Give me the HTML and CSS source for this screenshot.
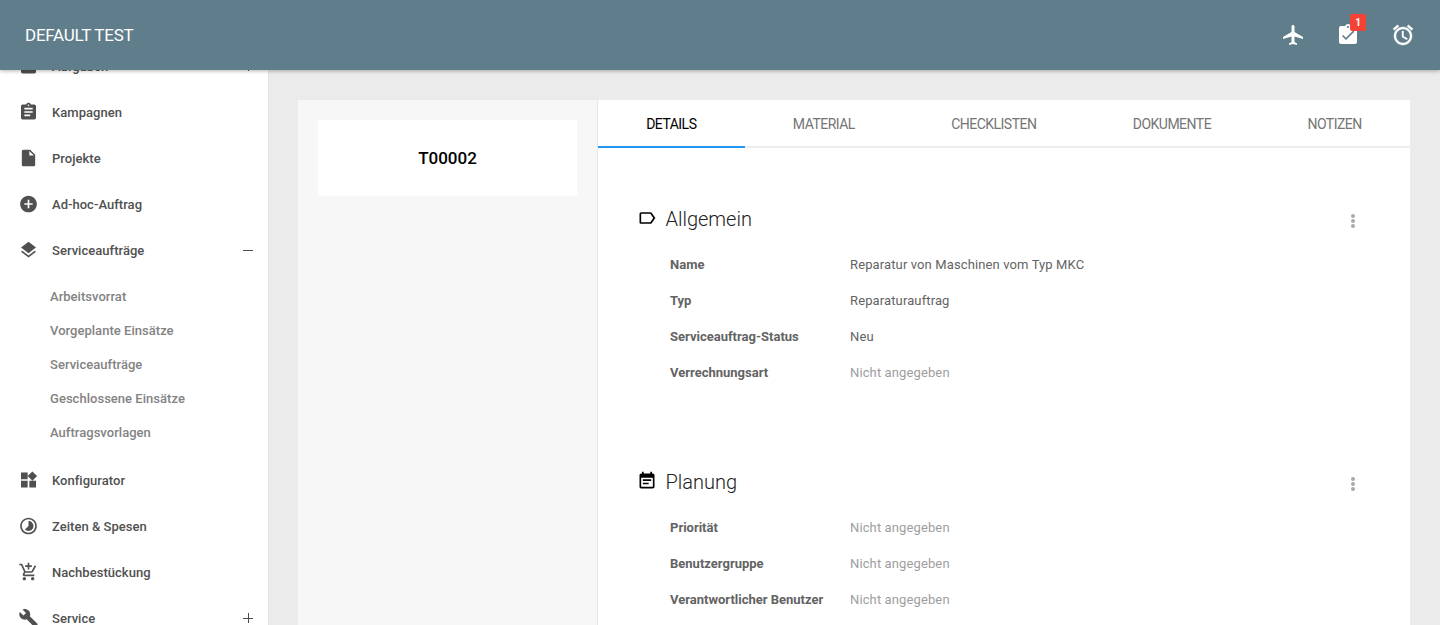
FILE: index.html
```html
<!DOCTYPE html>
<html lang="de">
<head>
<meta charset="utf-8">
<title>Serviceauftrag T00002</title>
<link rel="stylesheet" href="styles.css">
</head>
<body>
<header class="topbar">
  <div class="brand">DEFAULT TEST</div>
  <nav class="tools">
    <a class="tool"><svg viewBox="0 0 24 24"><path d="M22 16v-2l-8.500-5V3.500c0-.83-.67-1.500-1.500-1.500s-1.500.67-1.500 1.500V9L2 14v2l8.500-2.500V19L8 20.500V22l4-1 4 1v-1.500L13.500 19v-5.500L22 16z"/></svg></a>
    <a class="tool"><svg viewBox="0 0 24 24"><path fill-rule="evenodd" d="M19 3h-4.180C14.400 1.840 13.300 1 12 1s-2.400.84-2.820 2H5c-1.100 0-2 .9-2 2v14c0 1.100.9 2 2 2h14c1.100 0 2-.9 2-2V5c0-1.100-.9-2-2-2zm-7 0c.55 0 1 .45 1 1s-.45 1-1 1-1-.45-1-1 .45-1 1-1zm-2 14l-4-4 1.100-1.100L10 14.800l7.200-7.200L18.300 8.700l-8.300 8.300z"/></svg><span class="badge">1</span></a>
    <a class="tool"><svg class="alarm" viewBox="0 0 24 24"><path d="M22 5.720l-4.600-3.860-1.290 1.530 4.600 3.860L22 5.720zM7.880 3.390L6.600 1.860 2 5.710l1.290 1.530 4.590-3.850zM12.500 8H11v6l4.750 2.850.75-1.230-4-2.370V8zM12 4c-4.970 0-9 4.030-9 9s4.020 9 9 9c4.970 0 9-4.030 9-9s-4.030-9-9-9zm0 16c-3.870 0-7-3.130-7-7s3.130-7 7-7 7 3.130 7 7-3.130 7-7 7z"/></svg></a>
  </nav>
</header>
<div class="shell">
  <aside class="sidebar">
    <a class="item"><svg viewBox="0 0 24 24"><path d="M19 3h-4.180C14.400 1.840 13.300 1 12 1s-2.400.84-2.820 2H5c-1.100 0-2 .9-2 2v14c0 1.100.9 2 2 2h14c1.100 0 2-.9 2-2V5c0-1.100-.9-2-2-2zm-9 14l-4-4 1.410-1.410L10 14.170l6.590-6.590L18 9l-8 8z"/></svg><span>Aufgaben</span><i class="toggle plus"></i></a>
    <a class="item"><svg viewBox="0 0 24 24"><path d="M19 3h-4.180C14.400 1.840 13.300 1 12 1c-1.300 0-2.400.84-2.820 2H5c-1.100 0-2 .9-2 2v14c0 1.100.9 2 2 2h14c1.100 0 2-.9 2-2V5c0-1.100-.9-2-2-2zm-7 0c.55 0 1 .45 1 1s-.45 1-1 1-1-.45-1-1 .45-1 1-1zm2 14H7v-2h7v2zm3-4H7v-2h10v2zm0-4H7V7h10v2z"/></svg><span>Kampagnen</span></a>
    <a class="item"><svg viewBox="0 0 24 24"><path d="M6 2c-1.100 0-1.990.9-1.990 2L4 20c0 1.100.89 2 1.990 2H18c1.100 0 2-.9 2-2V8l-6-6H6zm7 7V3.500L18.500 9H13z"/></svg><span>Projekte</span></a>
    <a class="item"><svg viewBox="0 0 24 24"><path d="M12 2C6.480 2 2 6.480 2 12s4.480 10 10 10 10-4.480 10-10S17.520 2 12 2zm5 11h-4v4h-2v-4H7v-2h4V7h2v4h4v2z"/></svg><span>Ad-hoc-Auftrag</span></a>
    <a class="item"><svg viewBox="0 0 24 24"><path d="M11.990 18.540l-7.370-5.730L3 14.070l9 7 9-7-1.630-1.270-7.380 5.740zM12 16l7.360-5.730L21 9l-9-7-9 7 1.630 1.270L12 16z"/></svg><span>Serviceaufträge</span><i class="toggle"></i></a>
    <div class="submenu">
      <a>Arbeitsvorrat</a>
      <a>Vorgeplante Einsätze</a>
      <a>Serviceaufträge</a>
      <a>Geschlossene Einsätze</a>
      <a>Auftragsvorlagen</a>
    </div>
    <a class="item"><svg viewBox="0 0 24 24"><path d="M13 13v8h8v-8h-8zM3 21h8v-8H3v8zM3 3v8h8V3H3zm13.660-1.310L11 7.340 16.660 13l5.660-5.660-5.660-5.650z"/></svg><span>Konfigurator</span></a>
    <a class="item"><svg viewBox="0 0 24 24"><path d="M16.240 7.760C15.070 6.590 13.540 6 12 6v6l-4.240 4.240c2.340 2.340 6.140 2.340 8.490 0 2.340-2.340 2.340-6.140-.01-8.480zM12 2C6.480 2 2 6.480 2 12s4.480 10 10 10 10-4.480 10-10S17.520 2 12 2zm0 18c-4.420 0-8-3.580-8-8s3.580-8 8-8 8 3.580 8 8-3.580 8-8 8z"/></svg><span>Zeiten &amp; Spesen</span></a>
    <a class="item"><svg viewBox="0 0 24 24"><path d="M11 9h2V6h3V4h-3V1h-2v3H8v2h3v3zm-4 9c-1.100 0-1.990.9-1.990 2S5.900 22 7 22s2-.9 2-2-.9-2-2-2zm10 0c-1.100 0-1.990.9-1.990 2s.89 2 1.990 2 2-.9 2-2-.9-2-2-2zm-9.830-3.250l.03-.12.9-1.630h7.450c.75 0 1.410-.41 1.750-1.030l3.860-7.010L19.420 4h-.01l-1.100 2-2.760 5H8.530l-.13-.27L6.160 6l-.95-2-.94-2H1v2h2l3.600 7.590-1.350 2.450c-.16.28-.25.61-.25.96 0 1.100.9 2 2 2h12v-2H7.420c-.13 0-.25-.11-.25-.25z"/></svg><span>Nachbestückung</span></a>
    <a class="item"><svg viewBox="0 0 24 24"><path d="M22.700 19l-9.100-9.100c.9-2.300.4-5-1.500-6.900-2-2-5-2.400-7.400-1.300L9 6 6 9 1.600 4.700C.4 7.100.9 10.100 2.900 12.100c1.900 1.900 4.600 2.400 6.900 1.500l9.100 9.100c.4.4 1 .4 1.400 0l2.300-2.300c.5-.4.5-1.100.1-1.400z"/></svg><span>Service</span><i class="toggle plus"></i></a>
  </aside>
  <main class="content">
    <section class="order">
      <div class="order-number">T00002</div>
    </section>
    <section class="detail">
      <nav class="tabs">
        <a class="tab active">DETAILS</a>
        <a class="tab">MATERIAL</a>
        <a class="tab">CHECKLISTEN</a>
        <a class="tab">DOKUMENTE</a>
        <a class="tab">NOTIZEN</a>
      </nav>
      <div class="block">
        <div class="block-head">
          <svg viewBox="0 0 24 24"><path d="M17.630 5.840C17.270 5.330 16.670 5 16 5L5 5.010C3.900 5.010 3 5.900 3 7v10c0 1.100.9 1.990 2 1.990L16 19c.67 0 1.270-.33 1.630-.84L22 12l-4.370-6.160zM16 17H5V7h11l3.550 5L16 17z"/></svg>
          <h2>Allgemein</h2>
          <div class="more"><b></b><b></b><b></b></div>
        </div>
        <dl>
          <dt>Name</dt><dd>Reparatur von Maschinen vom Typ MKC</dd>
          <dt>Typ</dt><dd>Reparaturauftrag</dd>
          <dt>Serviceauftrag-Status</dt><dd>Neu</dd>
          <dt>Verrechnungsart</dt><dd class="empty">Nicht angegeben</dd>
        </dl>
      </div>
      <div class="block">
        <div class="block-head">
          <svg viewBox="0 0 24 24"><path d="M17 10H7v2h10v-2zm2-7h-1V1h-2v2H8V1H6v2H5c-1.110 0-1.990.9-1.990 2L3 19c0 1.100.89 2 2 2h14c1.100 0 2-.9 2-2V5c0-1.100-.9-2-2-2zm0 16H5V8h14v11zm-5-5H7v2h7v-2z"/></svg>
          <h2>Planung</h2>
          <div class="more"><b></b><b></b><b></b></div>
        </div>
        <dl>
          <dt>Priorität</dt><dd class="empty">Nicht angegeben</dd>
          <dt>Benutzergruppe</dt><dd class="empty">Nicht angegeben</dd>
          <dt>Verantwortlicher Benutzer</dt><dd class="empty">Nicht angegeben</dd>
        </dl>
      </div>
    </section>
  </main>
</div>
</body>
</html>
```
FILE: styles.css
```css
* { box-sizing: border-box; }
html, body { margin: 0; height: 100%; overflow: hidden; }
body {
  display: flex;
  flex-direction: column;
  background: #ebebeb;
  font-family: Roboto, "Liberation Sans", sans-serif;
  font-size: 13px;
  color: #636363;
}
svg { display: block; flex: none; fill: currentColor; }

.topbar {
  position: relative;
  z-index: 2;
  flex: none;
  display: flex;
  align-items: center;
  justify-content: space-between;
  height: 70px;
  padding: 0 25px;
  background: #607d8b;
  color: #fff;
  box-shadow: 0 1px 4px rgba(0, 0, 0, .3);
}
.brand { font-size: 17px; line-height: 20px; letter-spacing: -.25px; }
.tools { display: flex; gap: 31px; }
.tool { position: relative; }
.tool svg { width: 24px; height: 24px; }
.tool .alarm { stroke: currentColor; stroke-width: .4; }
.badge {
  position: absolute;
  top: -9px;
  left: 14px;
  width: 16px;
  height: 17px;
  border-radius: 2px;
  background: #f44336;
  font-size: 10px;
  font-weight: 700;
  line-height: 18px;
  text-align: center;
}

.shell { flex: 1; min-height: 0; display: flex; }
.sidebar {
  flex: none;
  width: 269px;
  height: 582px;
  margin-top: -27px;
  background: #fff;
  border-right: 1px solid #e3e3e3;
}
.item {
  display: flex;
  align-items: center;
  height: 46px;
  padding: 0 15px 0 18px;
  color: #505050;
  font-weight: 500;
  letter-spacing: .03px;
}
.item svg { width: 21px; height: 20px; margin: 0 13px 1px 0; }
.toggle {
  width: 10px;
  height: 11px;
  margin-left: auto;
  background: linear-gradient(#4c4c4c, #4c4c4c) center / 10px 1px no-repeat;
}
.plus {
  background: linear-gradient(#4c4c4c, #4c4c4c) center / 10px 1px no-repeat,
              linear-gradient(#4c4c4c, #4c4c4c) center / 1px 10px no-repeat;
}
.submenu { padding: 7px 0 7px 50px; }
.submenu a {
  display: block;
  line-height: 34px;
  color: #838383;
  font-weight: 500;
  letter-spacing: .03px;
}

.content { flex: 1; display: flex; padding: 30px 30px 0 29px; }
.order {
  flex: none;
  width: 300px;
  padding: 20px;
  background: #f7f7f7;
  border-right: 1px solid #e6e6e6;
}
.order-number {
  height: 76px;
  background: #fff;
  color: #000;
  font-size: 17px;
  font-weight: 500;
  line-height: 76px;
  text-align: center;
}
.detail { flex: 1; background: #fff; }
.tabs { display: flex; height: 48px; }
.tab {
  flex: 1 0 auto;
  padding: 0 40px;
  border-bottom: 2px solid #eee;
  color: #757575;
  font-size: 14px;
  line-height: 49px;
  letter-spacing: -.52px;
  text-align: center;
}
.active { color: #000; border-color: #2196f3; }

.block { padding: 54px 50px 0 39px; height: 263px; }
.block-head { display: flex; align-items: center; height: 34px; color: #000; }
.block-head svg { width: 20px; height: 20px; margin: 0 8px 2px .4px; }
.block-head h2 { margin: 0; font-size: 20px; font-weight: 300; color: #222; }
.more { display: grid; gap: 1px; margin: 3px 5px 0 auto; }
.more b { width: 4px; height: 4px; border-radius: 50%; background: #aaa; }
dl {
  display: grid;
  grid-template-columns: 180px 1fr;
  grid-auto-rows: 36px;
  align-items: center;
  margin: 10px 0 0 33px;
}
dt { font-weight: 700; }
dd { margin: 0; letter-spacing: .12px; }
.empty { color: #9e9e9e; }
```
